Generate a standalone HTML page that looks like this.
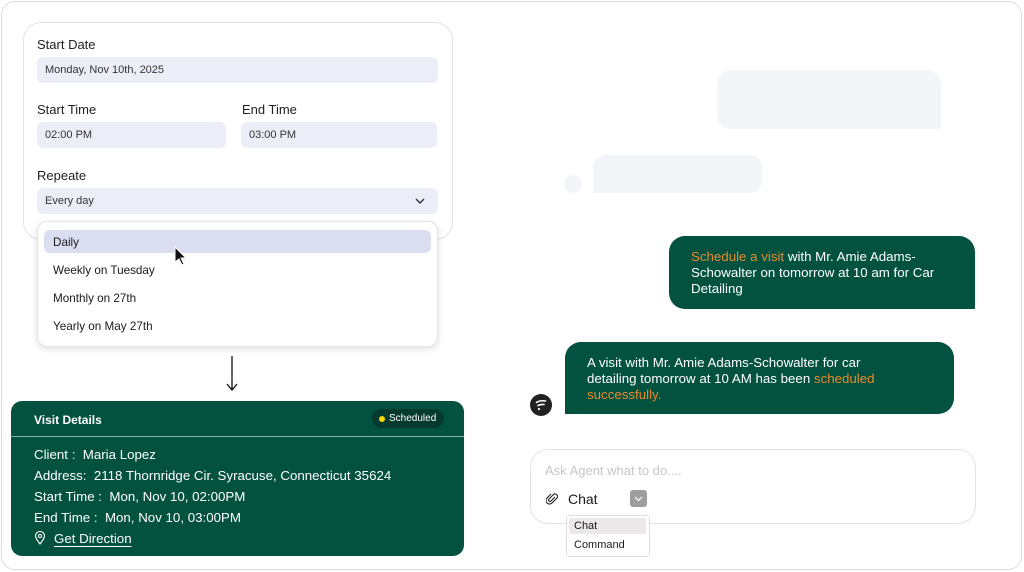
<!DOCTYPE html>
<html><head><meta charset="utf-8"><style>
*{box-sizing:border-box;margin:0;padding:0}
body{width:1024px;height:572px;background:#fff;font-family:"Liberation Sans",sans-serif;position:relative;overflow:hidden;color:#1a1a1a}
.abs{position:absolute}
.frame{left:1px;top:1px;width:1021px;height:569px;border:1px solid #dcdcdc;border-radius:14px}
.form{left:23px;top:22px;width:430px;height:218px;border:1px solid #e3e3e6;border-radius:18px;background:#fff}
.lbl{font-size:13px;color:#1f1f1f}
.inp{background:#eceef7;border-radius:6px;font-size:11px;color:#333;padding-left:8px;line-height:26px;height:26px}
.dd{left:37px;top:221px;width:401px;height:126px;background:#fff;border:1px solid #e4e4e6;border-radius:10px;box-shadow:0 2px 8px rgba(0,0,0,.12)}
.opt{position:absolute;left:15px;font-size:11.7px;color:#1a1a1a}
.card{left:11px;top:401px;width:453px;height:155px;background:#03513f;border-radius:11px;color:#fff}
.card .row{position:absolute;left:23px;font-size:13.3px}
.bub{background:#03513f;color:#fff;font-size:13.3px;line-height:16px}
.or{color:#e88a2e}
.grey{background:#f4f5f9}
</style></head><body>
<div class="abs frame"></div>
<div class="abs form"></div>
<div class="abs lbl" style="left:37px;top:37px">Start Date</div>
<div class="abs inp" style="left:37px;top:57px;width:401px">Monday, Nov 10th, 2025</div>
<div class="abs lbl" style="left:37px;top:102px">Start Time</div>
<div class="abs inp" style="left:37px;top:122px;width:189px">02:00 PM</div>
<div class="abs lbl" style="left:242px;top:102px">End Time</div>
<div class="abs inp" style="left:241px;top:122px;width:196px">03:00 PM</div>
<div class="abs lbl" style="left:37px;top:168px">Repeate</div>
<div class="abs inp" style="left:37px;top:188px;width:401px">Every day</div>
<svg class="abs" style="left:414px;top:196px" width="12" height="10"><path d="M2 3l4 4 4-4" stroke="#333" stroke-width="1.4" fill="none"/></svg>
<div class="abs dd">
<div class="abs" style="left:6px;top:8px;width:387px;height:23px;background:#dadef0;border-radius:6px"></div>
<div class="opt" style="top:14px">Daily</div>
<div class="opt" style="top:42px">Weekly on Tuesday</div>
<div class="opt" style="top:70px">Monthly on 27th</div>
<div class="opt" style="top:98px">Yearly on May 27th</div>
</div>
<svg class="abs" style="left:174px;top:246px" width="14" height="22"><path d="M1 1v15l4-3 3 6 2-1-3-6h5z" fill="#111" stroke="#fff" stroke-width="1"/></svg>
<svg class="abs" style="left:224px;top:355px" width="16" height="38"><path d="M8 1v34M3 29l5 6 5-6" stroke="#111" stroke-width="1.3" fill="none"/></svg>
<div class="abs card">
<div class="abs" style="left:23px;top:12px;font-size:12px;font-weight:bold">Visit Details</div>
<div class="abs" style="left:361px;top:8px;width:72px;height:19px;background:#063a2e;border-radius:10px;font-size:10px;line-height:19px;padding-left:17px">Scheduled</div>
<div class="abs" style="left:368px;top:15px;width:6px;height:6px;border-radius:50%;background:#f5d800"></div>
<div class="abs" style="left:0;top:35px;width:453px;height:1px;background:#7fb3a6"></div>
<div class="row" style="top:46px">Client :&nbsp; Maria Lopez</div>
<div class="row" style="top:67px">Address:&nbsp; 2118 Thornridge Cir. Syracuse, Connecticut 35624</div>
<div class="row" style="top:88px">Start Time :&nbsp; Mon, Nov 10, 02:00PM</div>
<div class="row" style="top:109px">End Time :&nbsp; Mon, Nov 10, 03:00PM</div>
<svg class="abs" style="left:23px;top:130px" width="12" height="14"><path d="M6 13C3 9 1.5 7 1.5 5a4.5 4.5 0 019 0c0 2-1.5 4-4.5 8z" stroke="#fff" stroke-width="1.1" fill="none"/><circle cx="6" cy="5" r="1.6" stroke="#fff" stroke-width="1.1" fill="none"/></svg>
<div class="row" style="left:43px;top:130px;text-decoration:underline;text-underline-offset:3px">Get Direction</div>
</div>
<div class="abs grey" style="left:717px;top:70px;width:224px;height:59px;border-radius:14px 14px 0 14px"></div>
<div class="abs grey" style="left:593px;top:155px;width:169px;height:38px;border-radius:12px 12px 12px 0"></div>
<div class="abs grey" style="left:564px;top:175px;width:18px;height:18px;border-radius:50%"></div>
<div class="abs bub" style="left:669px;top:236px;width:306px;height:73px;border-radius:16px 16px 0 16px;padding:13px 18px 0 22px">
<span class="or">Schedule a visit</span> with Mr. Amie Adams-Schowalter on tomorrow at 10 am for Car Detailing</div>
<div class="abs bub" style="left:565px;top:342px;width:389px;height:72px;border-radius:16px 16px 16px 0;padding:13px 50px 0 22px">
A visit with Mr. Amie Adams-Schowalter for car detailing tomorrow at 10 AM has been <span class="or">scheduled successfully.</span></div>
<div class="abs" style="left:530px;top:394px;width:22px;height:22px;border-radius:50%;background:#222"></div>
<svg class="abs" style="left:530px;top:394px" width="22" height="22"><path d="M6.5 8.5c3-2 6-2 9-1.5M8 11.5c2-1 4-1.2 6-1" stroke="#fff" stroke-width="1.6" fill="none" stroke-linecap="round"/><circle cx="9" cy="15" r="1.1" fill="#fff"/></svg>
<div class="abs" style="left:530px;top:449px;width:446px;height:75px;border:1px solid #e3e3e6;border-radius:18px"></div>
<div class="abs" style="left:545px;top:463px;font-size:13px;color:#c6c6c9">Ask Agent what to do....</div>
<svg class="abs" style="left:546px;top:492px" width="12" height="13"><path d="M9 5l-4 4a1.4 1.4 0 01-2-2l4.5-4.5a2.5 2.5 0 013.5 3.5L6 11a3.5 3.5 0 01-5-5l4-4" stroke="#222" stroke-width="1.1" fill="none"/></svg>
<div class="abs" style="left:568px;top:491px;font-size:14px;color:#1a1a1a">Chat</div>
<div class="abs" style="left:630px;top:490px;width:17px;height:17px;background:#9e9e9e;border-radius:3px"></div>
<svg class="abs" style="left:630px;top:490px" width="17" height="17"><path d="M5 7l3.5 3.5L12 7" stroke="#fff" stroke-width="1.2" fill="none"/></svg>
<div class="abs" style="left:566px;top:515px;width:84px;height:42px;background:#fff;border:1px solid #ddd;border-radius:3px"></div>
<div class="abs" style="left:569px;top:518px;width:77px;height:16px;background:#ece8ea;border-radius:2px"></div>
<div class="abs" style="left:574px;top:520px;font-size:11px">Chat</div>
<div class="abs" style="left:574px;top:539px;font-size:11px">Command</div>
</body></html>
